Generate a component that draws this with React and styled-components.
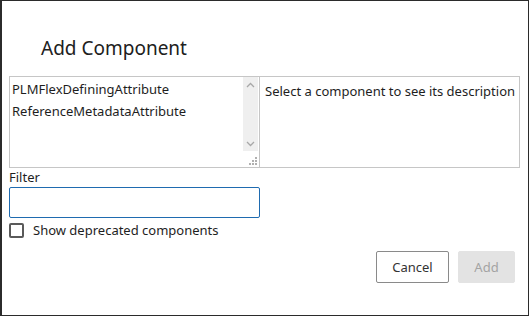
import React from "react";
import styled, { createGlobalStyle } from "styled-components";

const GlobalStyle = createGlobalStyle`
  html, body {
    margin: 0;
    padding: 0;
    background: #ffffff;
  }
  body {
    font-family: "Noto Sans", "Open Sans", "DejaVu Sans", sans-serif;
    color: #1e1e1e;
  }
  * {
    box-sizing: border-box;
  }
`;

const Dialog = styled.div`
  width: 529px;
  height: 316px;
  border: 1px solid #2b2b2b;
  border-left-width: 2px;
  padding: 0 8px 0 7px;
  display: flex;
  flex-direction: column;
`;

const Title = styled.h2`
  margin: 34px 0 0 32px;
  font-size: 19px;
  font-weight: 400;
  line-height: 26px;
  color: #202020;
`;

const Panels = styled.div`
  display: flex;
  margin-top: 15px;
  height: 92px;
`;

const ListBox = styled.div`
  position: relative;
  width: 251px;
  border: 1px solid #c6c6c6;
  display: flex;
`;

const Options = styled.div`
  flex: 1;
  padding: 1px 0 0 2px;
`;

const Option = styled.div`
  font-size: 13px;
  line-height: 22px;
  height: 22px;
  white-space: nowrap;
  color: #1e1e1e;
`;

const ScrollBar = styled.div`
  width: 15px;
  margin: 0 1px 16px 0;
  background: #efefef;
  display: flex;
  flex-direction: column;
  justify-content: space-between;
  align-items: center;
  padding: 5px 0 4px;
`;

const Grip = styled.svg`
  position: absolute;
  right: 2px;
  bottom: 2px;
`;

const Description = styled.div`
  flex: 1;
  border: 1px solid #c6c6c6;
  border-left: none;
  padding: 3px 0 0 5px;
  font-size: 13px;
  line-height: 22px;
  white-space: nowrap;
`;

const FieldLabel = styled.div`
  font-size: 13px;
  line-height: 18px;
  color: #1e1e1e;
`;

const FilterInput = styled.input`
  display: block;
  width: 251px;
  height: 31px;
  margin-top: 1px;
  border: 1px solid #1f6bb0;
  border-radius: 2px;
  outline: none;
  padding: 0 6px;
  font: inherit;
  font-size: 13px;
`;

const CheckRow = styled.label`
  display: flex;
  align-items: center;
  margin-top: 4px;
  font-size: 13px;
  line-height: 16px;
  color: #1e1e1e;
`;

const CheckBox = styled.span`
  width: 15px;
  height: 15px;
  border: 2px solid #5a5a5a;
  border-radius: 2px;
  margin-right: 9px;
`;

const Actions = styled.div`
  display: flex;
  justify-content: flex-end;
  gap: 9px;
  margin-top: 13px;
  padding-right: 5px;
`;

const Button = styled.button`
  height: 32px;
  padding: 0;
  width: ${(p) => p.w}px;
  border-radius: 2px;
  font-family: inherit;
  font-size: 13px;
  border: 1px solid ${(p) => (p.disabled ? "#e3e3e3" : "#8a8a8a")};
  background: ${(p) => (p.disabled ? "#e3e3e3" : "#ffffff")};
  color: ${(p) => (p.disabled ? "#a3a3a3" : "#333333")};
`;

function Chevron({ up }) {
  return (
    <svg width="9" height="6" viewBox="0 0 9 6">
      <path
        d={up ? "M1 5 L4.5 1.5 L8 5" : "M1 1 L4.5 4.5 L8 1"}
        fill="none"
        stroke="#a8a8a8"
        strokeWidth="1.3"
      />
    </svg>
  );
}

export default function App() {
  return (
    <>
      <GlobalStyle />
      <Dialog>
        <Title>Add Component</Title>
        <Panels>
          <ListBox>
            <Options>
              <Option>PLMFlexDefiningAttribute</Option>
              <Option>ReferenceMetadataAttribute</Option>
            </Options>
            <ScrollBar>
              <Chevron up />
              <Chevron />
            </ScrollBar>
            <Grip width="8" height="8" viewBox="0 0 8 8">
              <rect x="6" y="0" width="2" height="2" fill="#b0b0b0" />
              <rect x="3" y="3" width="2" height="2" fill="#b0b0b0" />
              <rect x="6" y="3" width="2" height="2" fill="#b0b0b0" />
              <rect x="0" y="6" width="2" height="2" fill="#b0b0b0" />
              <rect x="3" y="6" width="2" height="2" fill="#b0b0b0" />
              <rect x="6" y="6" width="2" height="2" fill="#b0b0b0" />
            </Grip>
          </ListBox>
          <Description>Select a component to see its description</Description>
        </Panels>
        <FieldLabel>Filter</FieldLabel>
        <FilterInput type="text" />
        <CheckRow>
          <CheckBox />
          Show deprecated components
        </CheckRow>
        <Actions>
          <Button w={73}>Cancel</Button>
          <Button w={57} disabled>
            Add
          </Button>
        </Actions>
      </Dialog>
    </>
  );
}
